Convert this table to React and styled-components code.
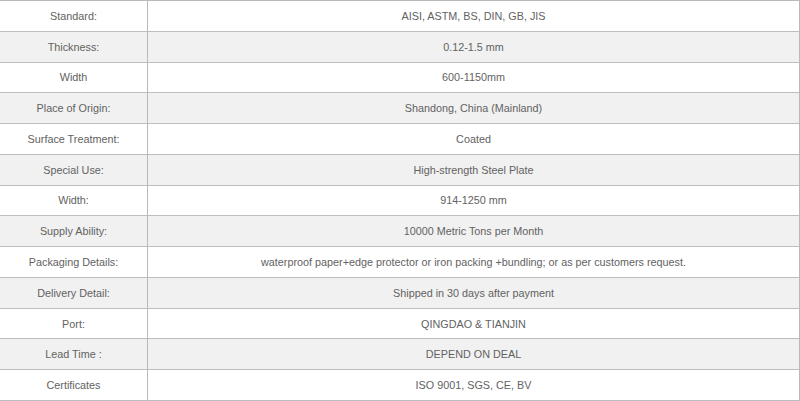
import React from "react";
import styled, { createGlobalStyle } from "styled-components";

const GlobalStyle = createGlobalStyle`
  html, body {
    margin: 0;
    padding: 0;
    background: #fff;
  }
`;

const rows = [
  ["Standard:", "AISI, ASTM, BS, DIN, GB, JIS"],
  ["Thickness:", "0.12-1.5 mm"],
  ["Width", "600-1150mm"],
  ["Place of Origin:", "Shandong, China (Mainland)"],
  ["Surface Treatment:", "Coated"],
  ["Special Use:", "High-strength Steel Plate"],
  ["Width:", "914-1250 mm"],
  ["Supply Ability:", "10000 Metric Tons per Month"],
  ["Packaging Details:", "waterproof paper+edge protector or iron packing +bundling; or as per customers request."],
  ["Delivery Detail:", "Shipped in 30 days after payment"],
  ["Port:", "QINGDAO & TIANJIN"],
  ["Lead Time :", "DEPEND ON DEAL"],
  ["Certificates", "ISO 9001, SGS, CE, BV"],
];

const Table = styled.div`
  width: 800px;
  height: 401px;
  box-sizing: border-box;
  display: grid;
  grid-template-columns: 147px 1fr;
  grid-template-rows: repeat(13, 1fr);
  border-top: 1px solid #b9b9b9;
  border-right: 1px solid #b9b9b9;
  font-family: "Liberation Sans", Arial, sans-serif;
  font-size: 10.8px;
  color: #626262;
`;

const Cell = styled.div`
  display: flex;
  align-items: center;
  justify-content: center;
  background: ${({ shaded }) => (shaded ? "#f1f1f1" : "#ffffff")};
  border-bottom: 1px solid #bdbdbd;
  border-left: ${({ value }) => (value ? "1px solid #b9b9b9" : "none")};
  white-space: nowrap;
`;

const App = () => {
  return (
    <React.Fragment>
      <GlobalStyle />
      <Table>
        {rows.map(([label, value], i) => (
          <React.Fragment key={i}>
            <Cell shaded={i % 2 === 1}>{label}</Cell>
            <Cell shaded={i % 2 === 1} value>
              {value}
            </Cell>
          </React.Fragment>
        ))}
      </Table>
    </React.Fragment>
  );
};

export default App;
